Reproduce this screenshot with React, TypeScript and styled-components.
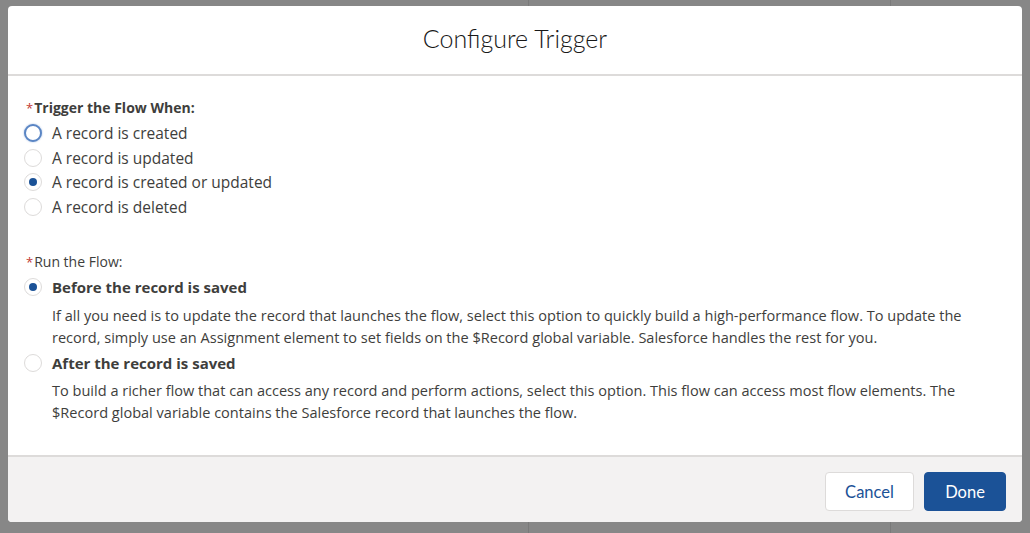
import React from 'react';
import styled, { createGlobalStyle, css } from 'styled-components';

const GlobalStyle = createGlobalStyle`
	html, body {
		margin: 0;
		padding: 0;
	}
	body {
		font-family: 'Open Sans', Lato, sans-serif;
		color: #3e3e3c;
	}
`;

const triggerOptions = [
	{ label: 'A record is created', checked: false, focused: true },
	{ label: 'A record is updated', checked: false, focused: false },
	{ label: 'A record is created or updated', checked: true, focused: false },
	{ label: 'A record is deleted', checked: false, focused: false },
];

const runOptions = [
	{
		label: 'Before the record is saved',
		checked: true,
		help: 'If all you need is to update the record that launches the flow, select this option to quickly build a high-performance flow. To update the record, simply use an Assignment element to set fields on the $Record global variable. Salesforce handles the rest for you.',
	},
	{
		label: 'After the record is saved',
		checked: false,
		help: 'To build a richer flow that can access any record and perform actions, select this option. This flow can access most flow elements. The $Record global variable contains the Salesforce record that launches the flow.',
	},
];

export default function App() {
	return (
		<>
			<GlobalStyle />
			<Page>
				<Backdrop>
					<Pane $width={529} />
					<Pane $width={362} />
					<Pane />
				</Backdrop>
				<Modal>
					<Header>
						<Title>Configure Trigger</Title>
					</Header>
					<Body>
						<Fieldset>
							<Legend $bold>
								<Required>*</Required>Trigger the Flow When:
							</Legend>
							{triggerOptions.map((o) => (
								<RadioRow key={o.label}>
									<Radio $checked={o.checked} $focused={o.focused} />
									<RadioLabel>{o.label}</RadioLabel>
								</RadioRow>
							))}
						</Fieldset>
						<Fieldset $spaced>
							<Legend>
								<Required>*</Required>Run the Flow:
							</Legend>
							{runOptions.map((o) => (
								<div key={o.label}>
									<RadioRow>
										<Radio $checked={o.checked} />
										<RadioLabel $bold>{o.label}</RadioLabel>
									</RadioRow>
									<HelpText>{o.help}</HelpText>
								</div>
							))}
						</Fieldset>
					</Body>
					<Footer>
						<Button $width={89}>Cancel</Button>
						<Button $width={82} $brand>
							Done
						</Button>
					</Footer>
				</Modal>
			</Page>
		</>
	);
}

const Page = styled.div`
	position: relative;
	width: 1030px;
	height: 533px;
	overflow: hidden;
	background: #878787;
`;

const Backdrop = styled.div`
	display: flex;
	height: 100%;
`;

const Pane = styled.div<{ $width?: number }>`
	flex: ${(p) => (p.$width ? `0 0 ${p.$width}px` : '1')};
	border-right: 1px solid #7a7a7a;
	box-sizing: border-box;
	&:last-child {
		border-right: none;
	}
`;

const Modal = styled.div`
	position: absolute;
	top: 6px;
	left: 8px;
	right: 8px;
	bottom: 11px;
	background: #fff;
	border-radius: 4px;
	display: flex;
	flex-direction: column;
	overflow: hidden;
`;

const Header = styled.div`
	height: 68px;
	flex: 0 0 auto;
	display: flex;
	align-items: center;
	justify-content: center;
	border-bottom: 2px solid #dddbda;
`;

const Title = styled.h2`
	margin: 0 0 5px;
	font-family: Lato, 'Open Sans', sans-serif;
	font-size: 25px;
	font-weight: 300;
	color: #181818;
`;

const Body = styled.div`
	flex: 1;
	padding: 22px 16px 0 16px;
`;

const Fieldset = styled.div<{ $spaced?: boolean }>`
	display: flex;
	flex-direction: column;
	margin-top: ${(p) => (p.$spaced ? '33px' : '0')};
`;

const Legend = styled.div<{ $bold?: boolean }>`
	font-size: 14px;
	line-height: 20px;
	font-weight: ${(p) => (p.$bold ? 700 : 400)};
	color: #3e3e3c;
	margin-bottom: 3px;
	padding-left: 2px;
`;

const Required = styled.span`
	color: #c23934;
	font-size: 13px;
	margin-right: 1px;
	font-weight: 400;
`;

const RadioRow = styled.div`
	display: flex;
	align-items: center;
	gap: 10px;
	height: 24.5px;
`;

const Radio = styled.span<{ $checked?: boolean; $focused?: boolean }>`
	position: relative;
	width: 18px;
	height: 18px;
	box-sizing: border-box;
	border-radius: 50%;
	border: 1px solid #dddbda;
	background: #fff;
	flex: 0 0 auto;
	${(p) =>
		p.$focused &&
		css`
			border: 2px solid #5b86c4;
			box-shadow: 0 0 2px #9ab5dd;
		`}
	${(p) =>
		p.$checked &&
		css`
			&::after {
				content: '';
				position: absolute;
				top: 50%;
				left: 50%;
				width: 8px;
				height: 8px;
				margin: -4px 0 0 -4px;
				border-radius: 50%;
				background: #1b5297;
			}
		`}
`;

const RadioLabel = styled.span<{ $bold?: boolean }>`
	font-size: ${(p) => (p.$bold ? '15px' : '15.5px')};
	font-weight: ${(p) => (p.$bold ? 700 : 400)};
	color: #3e3e3c;
`;

const HelpText = styled.p`
	margin: 4px 0 3px 28px;
	font-size: 14.55px;
	line-height: 22px;
	color: #3e3e3c;
	padding-right: 30px;
`;

const Footer = styled.div`
	flex: 0 0 auto;
	display: flex;
	justify-content: flex-end;
	gap: 10px;
	padding: 15px 16px 11px;
	background: #f3f2f2;
	border-top: 2px solid #dddbda;
`;

const Button = styled.button<{ $brand?: boolean; $width: number }>`
	width: ${(p) => p.$width}px;
	height: 39px;
	padding: 0;
	border-radius: 4px;
	font-family: Lato, 'Open Sans', sans-serif;
	font-size: 16.5px;
	border: 1px solid ${(p) => (p.$brand ? '#1b5297' : '#dddbda')};
	background: ${(p) => (p.$brand ? '#1b5297' : '#fff')};
	color: ${(p) => (p.$brand ? '#fff' : '#1b5297')};
`;
